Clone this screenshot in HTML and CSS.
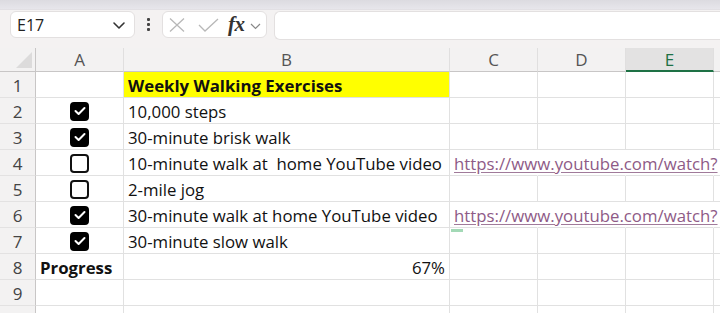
FILE: index.html
```html
<!DOCTYPE html>
<html>
<head>
<meta charset="utf-8">
<link rel="stylesheet" href="styles.css">
</head>
<body>
<div class="app">
  <div class="topband"></div>
  <div class="fbar">
    <div class="namebox"><span class="nb-text">E17</span>
      <svg class="chev" width="14" height="10" viewBox="0 0 14 10"><path d="M2 3 L7 8 L12 3" fill="none" stroke="#333" stroke-width="1.6" stroke-linecap="round" stroke-linejoin="round"/></svg>
    </div>
    <div class="dots"><span></span><span></span><span></span></div>
    <div class="fxbox">
      <svg class="ic-x" width="16" height="14" viewBox="0 0 16 14"><path d="M1 0.5 L15 13.5 M15 0.5 L1 13.5" stroke="#b8b8b8" stroke-width="1.3" fill="none"/></svg>
      <svg class="ic-ok" width="21" height="14" viewBox="0 0 21 14"><path d="M1 7 L7 13 L20 1" stroke="#b8b8b8" stroke-width="1.3" fill="none"/></svg>
      <span class="fx">fx</span>
      <svg class="ic-dd" width="11" height="8" viewBox="0 0 11 8"><path d="M1 2 L5.5 6.5 L10 2" fill="none" stroke="#888" stroke-width="1.2"/></svg>
    </div>
    <div class="finput"></div>
  </div>
  <div class="sheet">
    <div class="hdr corner"><span class="tri"></span></div>
    <div class="hdr col">A</div>
    <div class="hdr col">B</div>
    <div class="hdr col">C</div>
    <div class="hdr col">D</div>
    <div class="hdr col sel">E</div>
    <div class="hdr col"></div>

    <div class="rn">1</div><div class="c"></div><div class="c yellow b">Weekly Walking Exercises</div><div class="c"></div><div class="c"></div><div class="c"></div><div class="c"></div>
    <div class="rn">2</div><div class="c ctr"><span class="cb on"><svg width="12" height="10" viewBox="0 0 12 10"><path d="M1.5 5 L4.6 8 L10.5 2" fill="none" stroke="#fff" stroke-width="2" stroke-linecap="round" stroke-linejoin="round"/></svg></span></div><div class="c">10,000 steps</div><div class="c"></div><div class="c"></div><div class="c"></div><div class="c"></div>
    <div class="rn">3</div><div class="c ctr"><span class="cb on"><svg width="12" height="10" viewBox="0 0 12 10"><path d="M1.5 5 L4.6 8 L10.5 2" fill="none" stroke="#fff" stroke-width="2" stroke-linecap="round" stroke-linejoin="round"/></svg></span></div><div class="c">30-minute brisk walk</div><div class="c"></div><div class="c"></div><div class="c"></div><div class="c"></div>
    <div class="rn">4</div><div class="c ctr"><span class="cb"></span></div><div class="c">10-minute walk at&nbsp; home YouTube video</div><div class="c ovf"><span class="link">https://www.youtube.com/watch?</span></div><div class="c nob"></div><div class="c nob"></div><div class="c"></div>
    <div class="rn">5</div><div class="c ctr"><span class="cb"></span></div><div class="c">2-mile jog</div><div class="c"></div><div class="c"></div><div class="c"></div><div class="c"></div>
    <div class="rn">6</div><div class="c ctr"><span class="cb on"><svg width="12" height="10" viewBox="0 0 12 10"><path d="M1.5 5 L4.6 8 L10.5 2" fill="none" stroke="#fff" stroke-width="2" stroke-linecap="round" stroke-linejoin="round"/></svg></span></div><div class="c">30-minute walk at home YouTube video</div><div class="c ovf"><span class="link">https://www.youtube.com/watch?</span></div><div class="c nob"></div><div class="c nob"></div><div class="c"></div>
    <div class="rn">7</div><div class="c ctr"><span class="cb on"><svg width="12" height="10" viewBox="0 0 12 10"><path d="M1.5 5 L4.6 8 L10.5 2" fill="none" stroke="#fff" stroke-width="2" stroke-linecap="round" stroke-linejoin="round"/></svg></span></div><div class="c">30-minute slow walk</div><div class="c mark"><span class="grn"></span></div><div class="c"></div><div class="c"></div><div class="c"></div>
    <div class="rn">8</div><div class="c b">Progress</div><div class="c right">67%</div><div class="c"></div><div class="c"></div><div class="c"></div><div class="c"></div>
    <div class="rn">9</div><div class="c"></div><div class="c"></div><div class="c"></div><div class="c"></div><div class="c"></div><div class="c"></div>
    <div class="rn"></div><div class="c"></div><div class="c"></div><div class="c"></div><div class="c"></div><div class="c"></div><div class="c"></div>
  </div>
</div>
</body>
</html>
```

FILE: styles.css
```css
html, body {
  margin: 0;
  padding: 0;
  width: 720px;
  height: 313px;
  overflow: hidden;
  background: #f4f2f2;
  font-family: "Open Sans", "Noto Sans", sans-serif;
}
.app {
  width: 720px;
  height: 313px;
  overflow: hidden;
}
.topband {
  height: 9px;
  background: linear-gradient(#dcdbe0, #e7e6eb);
  border-bottom: 1px solid #e2e0e4;
}
.fbar {
  height: 38px;
  display: flex;
  align-items: flex-start;
  box-sizing: border-box;
}
.namebox {
  margin-left: 10px;
  margin-top: 1px;
  width: 125px;
  height: 27px;
  box-sizing: border-box;
  background: #fff;
  border: 1px solid #e3e0e0;
  border-radius: 6px;
  display: flex;
  align-items: center;
  justify-content: space-between;
  padding: 0 8px 0 6px;
}
.nb-text {
  font-size: 16px;
  color: #222;
}
.dots {
  width: 27px;
  height: 28px;
  display: flex;
  flex-direction: column;
  align-items: center;
  justify-content: center;
  gap: 2px;
}
.dots span {
  width: 3px;
  height: 3px;
  background: #444;
  border-radius: 1px;
}
.fxbox {
  margin-top: 1px;
  width: 105px;
  height: 27px;
  box-sizing: border-box;
  background: #fff;
  border: 1px solid #e3e0e0;
  border-radius: 6px;
  display: flex;
  align-items: center;
  padding-left: 5px;
}
.ic-x {
  margin-left: 1px;
}
.ic-ok {
  margin-left: 13px;
}
.fx {
  font-family: "Liberation Serif", "DejaVu Serif", serif;
  font-style: italic;
  font-weight: bold;
  font-size: 21px;
  color: #333;
  margin-left: 9px;
  line-height: 1;
  letter-spacing: -0.5px;
}
.ic-dd {
  margin-left: 5px;
  margin-top: 2px;
}
.finput {
  margin-left: 7px;
  margin-top: 1px;
  flex: 1;
  height: 27px;
  background: #fff;
  border: 1px solid #e3e0e0;
  border-right: none;
  border-radius: 6px 0 0 6px;
}
.sheet {
  display: grid;
  grid-template-columns: 36px 88px 326px 88px 88px 88px 88px;
  grid-template-rows: 24px repeat(10, 26px);
  background: #fff;
}
.hdr {
  background: #f3f2f2;
  border-right: 1px solid #e0dfdf;
  border-bottom: 1px solid #c8c6c6;
  box-sizing: border-box;
  display: flex;
  align-items: center;
  justify-content: center;
  font-size: 17px;
  color: #555;
}
.corner {
  position: relative;
  border-right: 1px solid #c8c6c6;
}
.tri {
  position: absolute;
  right: 3px;
  bottom: 3px;
  width: 0;
  height: 0;
  border-left: 16px solid transparent;
  border-bottom: 16px solid #dcdbdb;
}
.hdr.sel {
  background: #e3e2e2;
  color: #1e7145;
  border-bottom: 2px solid #1e7145;
}
.rn {
  background: #f3f2f2;
  border-right: 1px solid #c8c6c6;
  border-bottom: 1px solid #e3e2e2;
  box-sizing: border-box;
  display: flex;
  align-items: center;
  justify-content: center;
  font-size: 17px;
  color: #444;
  padding-top: 1px;
}
.c {
  border-right: 1px solid #e1e1e1;
  border-bottom: 1px solid #e1e1e1;
  box-sizing: border-box;
  display: flex;
  align-items: center;
  padding: 1px 4px 0 4px;
  font-size: 16.8px;
  color: #111;
  white-space: nowrap;
  overflow: visible;
  position: relative;
}
.c.nob {
  border-right-color: transparent;
}
.c.ovf {
  z-index: 2;
  border-right-color: transparent;
}
.c.ctr {
  justify-content: center;
}
.c.right {
  justify-content: flex-end;
}
.c.b {
  font-weight: bold;
}
.yellow {
  background: #ffff00;
}
.link {
  color: #8e5a86;
  text-decoration: underline;
  text-decoration-color: #a07a9a;
  text-underline-offset: 2px;
  background: #fff;
}
.cb {
  width: 19px;
  height: 19px;
  box-sizing: border-box;
  border: 2px solid #111;
  border-radius: 4px;
  display: flex;
  align-items: center;
  justify-content: center;
  background: #fff;
}
.cb.on {
  background: #000;
  border-color: #000;
}
.grn {
  position: absolute;
  left: 1px;
  top: 1px;
  width: 12px;
  height: 3px;
  background: #a3d9b6;
}
```
